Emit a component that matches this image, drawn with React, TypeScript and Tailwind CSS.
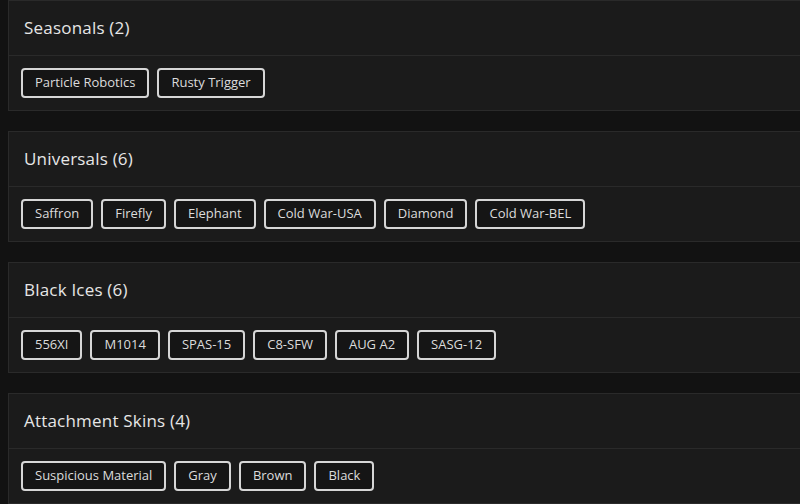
import React from "react";

const sections: { title: string; items: string[] }[] = [
  { title: "Seasonals (2)", items: ["Particle Robotics", "Rusty Trigger"] },
  { title: "Universals (6)", items: ["Saffron", "Firefly", "Elephant", "Cold War-USA", "Diamond", "Cold War-BEL"] },
  { title: "Black Ices (6)", items: ["556XI", "M1014", "SPAS-15", "C8-SFW", "AUG A2", "SASG-12"] },
  { title: "Attachment Skins (4)", items: ["Suspicious Material", "Gray", "Brown", "Black"] },
];

export default function App() {
  return (
    <div className="min-h-[504px] w-[800px] overflow-hidden bg-[#121212] pl-2" style={{ fontFamily: '"Open Sans", sans-serif' }}>
      <div className="flex w-[800px] flex-col gap-5">
        {sections.map((s) => (
          <div key={s.title} className="border border-[#2a2a2a] bg-[#1b1b1b]">
            <div className="flex h-[55px] items-center border-b border-[#2a2a2a] px-[15px]">
              <span className="text-[17px] font-medium tracking-[0.2px] text-[#e6e6e6]">{s.title}</span>
            </div>
            <div className="flex gap-2 px-3 py-3">
              {s.items.map((it) => (
                <div key={it} className="flex h-[30px] items-center rounded-[4px] border-2 border-[#d6d6d6] bg-[#151515] px-3 text-[13px] text-[#dcdcdc]">
                  {it}
                </div>
              ))}
            </div>
          </div>
        ))}
      </div>
    </div>
  );
}
